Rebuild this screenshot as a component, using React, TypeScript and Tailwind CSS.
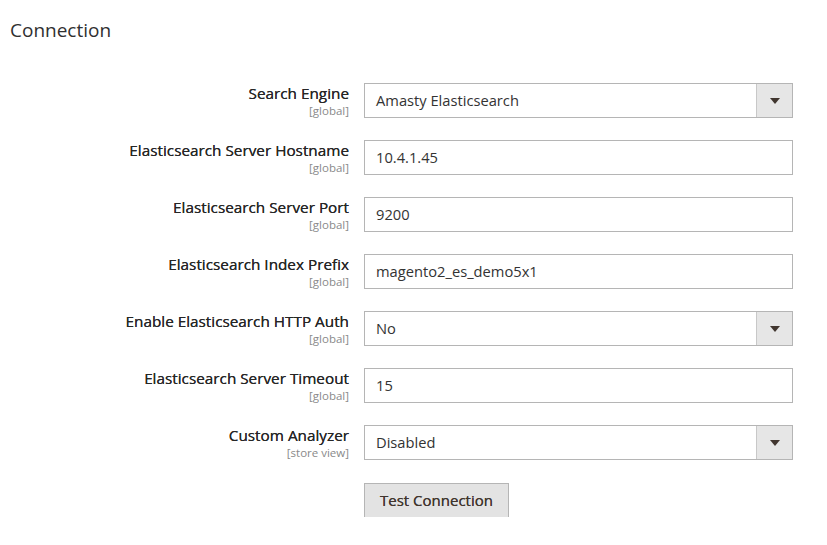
import React from "react"

type Field = {
  label: string
  scope: string
  value: string
  select?: boolean
}

const fields: Field[] = [
  { label: "Search Engine", scope: "[global]", value: "Amasty Elasticsearch", select: true },
  { label: "Elasticsearch Server Hostname", scope: "[global]", value: "10.4.1.45" },
  { label: "Elasticsearch Server Port", scope: "[global]", value: "9200" },
  { label: "Elasticsearch Index Prefix", scope: "[global]", value: "magento2_es_demo5x1" },
  { label: "Enable Elasticsearch HTTP Auth", scope: "[global]", value: "No", select: true },
  { label: "Elasticsearch Server Timeout", scope: "[global]", value: "15" },
  { label: "Custom Analyzer", scope: "[store view]", value: "Disabled", select: true },
]

const Row = ({ field }: { field: Field }) => (
  <div className="flex items-start gap-[15px]">
    {/* Label */}
    <div className="w-[349px] pt-[1px] text-right">
      <div className="text-[15.3px] leading-[19px] text-[#262626] [text-shadow:0_0_0.3px_#303030]">{field.label}</div>
      <div className="mt-[1px] text-[11.5px] leading-[13px] text-[#8a8a8a]">{field.scope}</div>
    </div>

    {/* Control */}
    <div className="flex h-[35px] w-[429px] items-stretch border border-[#b5b5b5] bg-white">
      <div className="flex flex-1 items-center pl-[11px] text-[14.7px] text-[#333333]">{field.value}</div>
      {field.select && (
        <div className="flex w-[36px] items-center justify-center border-l border-[#c8c8c8] bg-[#e6e6e6]">
          <svg width="10" height="6" viewBox="0 0 10 6">
            <path d="M0 0h10L5 6z" fill="#41362f" />
          </svg>
        </div>
      )}
    </div>
  </div>
)

export default function App() {
  return (
    <div className="min-h-[545px] w-[827px] bg-white font-['Open_Sans',sans-serif]">
      <h2 className="pl-[10px] pt-[18px] text-[19px] leading-[24px] font-normal text-[#303030]">Connection</h2>

      <div className="mt-[41px] flex flex-col gap-[22px]">
        {fields.map((f) => (
          <Row key={f.label} field={f} />
        ))}
      </div>

      <div className="mt-[23px] pl-[364px]">
        <button className="h-[34px] w-[145px] border border-[#b5b5b5] border-b-0 bg-[#e3e3e3] text-[15px] text-[#41362f] [text-shadow:0_0_0.3px_#41362f]">
          Test Connection
        </button>
      </div>
    </div>
  )
}
